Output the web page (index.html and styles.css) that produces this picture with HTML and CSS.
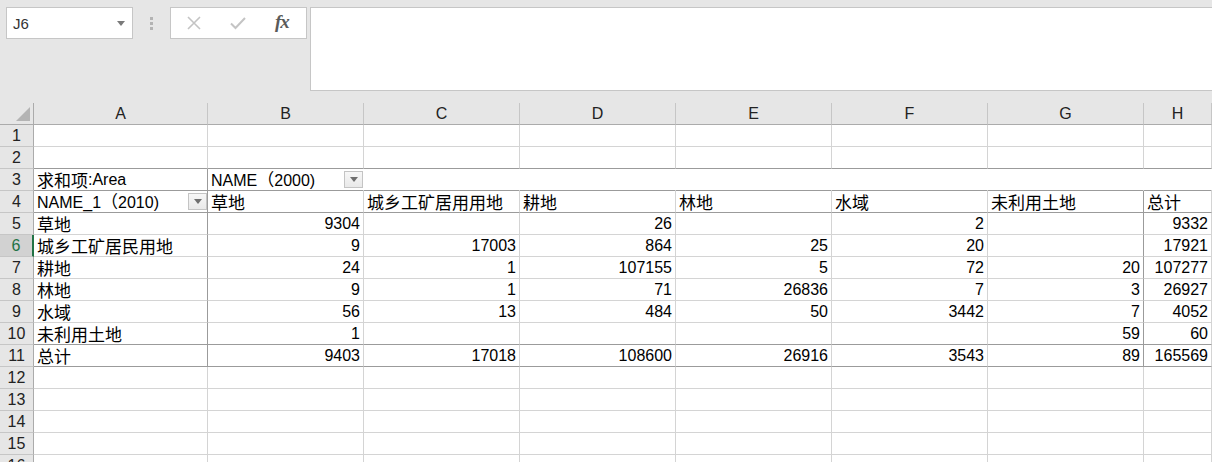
FILE: index.html
```html
<!DOCTYPE html>
<html lang="zh-CN">
<head>
<meta charset="utf-8">
<title>Pivot</title>
<link rel="stylesheet" href="styles.css">
</head>
<body>
<div class="toolbar">
  <div class="namebox">
    <span class="nb-text">J6</span>
    <svg class="nb-arrow" width="8" height="5" viewBox="0 0 8 5"><path d="M0 0H8L4 5Z" fill="#7a7a7a"/></svg>
  </div>
  <div class="grip"><i></i><i></i><i></i></div>
  <div class="fxbox">
    <svg class="ic" width="16" height="16" viewBox="0 0 16 16"><path d="M2 2L14 14M14 2L2 14" stroke="#c4c4c4" stroke-width="1.6" fill="none"/></svg>
    <svg class="ic" width="18" height="16" viewBox="0 0 18 16"><path d="M2 8.5L6.5 13L16 3" stroke="#c4c4c4" stroke-width="2" fill="none"/></svg>
    <span class="fx">fx</span>
  </div>
  <div class="formula"></div>
</div>

<div class="sheet">
  <div class="corner"><span class="tri"></span></div>
  <div class="ch">A</div><div class="ch">B</div><div class="ch">C</div><div class="ch">D</div><div class="ch">E</div><div class="ch">F</div><div class="ch">G</div><div class="ch">H</div>

  <div class="rh">1</div>
  <div class="c"></div><div class="c"></div><div class="c"></div><div class="c"></div><div class="c"></div><div class="c"></div><div class="c"></div><div class="c"></div>

  <div class="rh">2</div>
  <div class="c db"></div><div class="c db"></div><div class="c db"></div><div class="c db"></div><div class="c db"></div><div class="c db"></div><div class="c db"></div><div class="c db"></div>

  <div class="rh">3</div>
  <div class="c db dr"><span class="z">求和项</span>:Area</div>
  <div class="c db nr field"><span>NAME<span class="z">（</span>2000)</span><span class="dd"><svg width="8" height="5" viewBox="0 0 8 5"><path d="M0 0H8L4 5Z" fill="#6f6f6f"/></svg></span></div>
  <div class="c db nr"></div><div class="c db nr"></div><div class="c db nr"></div><div class="c db nr"></div><div class="c db nr"></div><div class="c db nr"></div>

  <div class="rh">4</div>
  <div class="c db dr field"><span>NAME_1<span class="z">（</span>2010)</span><span class="dd"><svg width="8" height="5" viewBox="0 0 8 5"><path d="M0 0H8L4 5Z" fill="#6f6f6f"/></svg></span></div>
  <div class="c db z">草地</div><div class="c db z">城乡工矿居用用地</div><div class="c db z">耕地</div><div class="c db z">林地</div><div class="c db z">水域</div><div class="c db dr z">未利用土地</div><div class="c db z">总计</div>

  <div class="rh">5</div>
  <div class="c dr z">草地</div><div class="c n">9304</div><div class="c n"></div><div class="c n">26</div><div class="c n"></div><div class="c n">2</div><div class="c n dr"></div><div class="c n">9332</div>

  <div class="rh sel">6</div>
  <div class="c dr z">城乡工矿居民用地</div><div class="c n">9</div><div class="c n">17003</div><div class="c n">864</div><div class="c n">25</div><div class="c n">20</div><div class="c n dr"></div><div class="c n">17921</div>

  <div class="rh">7</div>
  <div class="c dr z">耕地</div><div class="c n">24</div><div class="c n">1</div><div class="c n">107155</div><div class="c n">5</div><div class="c n">72</div><div class="c n dr">20</div><div class="c n">107277</div>

  <div class="rh">8</div>
  <div class="c dr z">林地</div><div class="c n">9</div><div class="c n">1</div><div class="c n">71</div><div class="c n">26836</div><div class="c n">7</div><div class="c n dr">3</div><div class="c n">26927</div>

  <div class="rh">9</div>
  <div class="c dr z">水域</div><div class="c n">56</div><div class="c n">13</div><div class="c n">484</div><div class="c n">50</div><div class="c n">3442</div><div class="c n dr">7</div><div class="c n">4052</div>

  <div class="rh">10</div>
  <div class="c dr db z">未利用土地</div><div class="c n db">1</div><div class="c n db"></div><div class="c n db"></div><div class="c n db"></div><div class="c n db"></div><div class="c n db dr">59</div><div class="c n db">60</div>

  <div class="rh">11</div>
  <div class="c dr db z">总计</div><div class="c n db">9403</div><div class="c n db">17018</div><div class="c n db">108600</div><div class="c n db">26916</div><div class="c n db">3543</div><div class="c n db dr">89</div><div class="c n db">165569</div>

  <div class="rh">12</div>
  <div class="c"></div><div class="c"></div><div class="c"></div><div class="c"></div><div class="c"></div><div class="c"></div><div class="c"></div><div class="c"></div>

  <div class="rh">13</div>
  <div class="c"></div><div class="c"></div><div class="c"></div><div class="c"></div><div class="c"></div><div class="c"></div><div class="c"></div><div class="c"></div>

  <div class="rh">14</div>
  <div class="c"></div><div class="c"></div><div class="c"></div><div class="c"></div><div class="c"></div><div class="c"></div><div class="c"></div><div class="c"></div>

  <div class="rh">15</div>
  <div class="c"></div><div class="c"></div><div class="c"></div><div class="c"></div><div class="c"></div><div class="c"></div><div class="c"></div><div class="c"></div>

  <div class="rh">16</div>
  <div class="c"></div><div class="c"></div><div class="c"></div><div class="c"></div><div class="c"></div><div class="c"></div><div class="c"></div><div class="c"></div>
</div>
</body>
</html>
```

FILE: styles.css
```css
html, body {
  margin: 0;
  padding: 0;
  background: #e6e6e6;
  overflow: hidden;
  width: 1212px;
  height: 462px;
}

body {
  font-family: "Liberation Sans", "Noto Sans CJK SC", sans-serif;
  font-size: 16px;
  color: #000;
}

.z {
  font-family: "Noto Sans CJK SC", sans-serif;
  font-size: 17px;
}

.toolbar {
  height: 103px;
  box-sizing: border-box;
  padding: 7px 0 0 6px;
  display: flex;
  align-items: flex-start;
}

.namebox {
  width: 127px;
  height: 32px;
  box-sizing: border-box;
  background: #fff;
  border: 1px solid #c6c6c6;
  display: flex;
  align-items: center;
  justify-content: space-between;
  padding: 0 7px 0 6px;
}

.nb-text {
  color: #333;
  font-size: 15px;
}

.grip {
  width: 37px;
  height: 32px;
  display: flex;
  flex-direction: column;
  align-items: center;
  justify-content: center;
  gap: 2px;
}

.grip i {
  display: block;
  width: 3px;
  height: 3px;
  background: #b3b3b3;
}

.fxbox {
  width: 137px;
  height: 32px;
  box-sizing: border-box;
  background: #fff;
  border: 1px solid #c6c6c6;
  display: flex;
  align-items: center;
  padding-left: 15px;
  gap: 27px;
}

.fx {
  font-family: "Liberation Serif", serif;
  font-style: italic;
  font-weight: bold;
  font-size: 19px;
  color: #5a5a5a;
  letter-spacing: -1px;
  margin-left: 1px;
  margin-top: -2px;
}

.formula {
  flex: 1;
  height: 84px;
  margin-left: 3px;
  margin-right: -2px;
  box-sizing: border-box;
  background: #fff;
  border: 1px solid #c6c6c6;
}

.sheet {
  display: grid;
  grid-template-columns: 34px 174px repeat(6, 156px) 68px;
  grid-auto-rows: 22px;
  background: #fff;
}

.corner,
.ch,
.rh {
  background: #e6e6e6;
  box-sizing: border-box;
  color: #222;
}

.corner {
  position: relative;
  border-right: 1px solid #ababab;
  border-bottom: 1px solid #ababab;
}

.tri {
  position: absolute;
  right: 3px;
  bottom: 3px;
  width: 0;
  height: 0;
  border-style: solid;
  border-width: 0 0 14px 14px;
  border-color: transparent transparent #b4b4b4 transparent;
}

.ch {
  border-right: 1px solid #c6c6c6;
  border-bottom: 1px solid #ababab;
  display: flex;
  align-items: center;
  justify-content: center;
  line-height: 21px;
}

.rh {
  border-right: 1px solid #ababab;
  border-bottom: 1px solid #c6c6c6;
  display: flex;
  align-items: center;
  justify-content: center;
  line-height: 21px;
}

.rh.sel {
  background: #d2d2d2;
  color: #217346;
  border-right: 2px solid #217346;
}

.c {
  box-sizing: border-box;
  border-right: 1px solid #d4d4d4;
  border-bottom: 1px solid #d4d4d4;
  padding: 0 3px;
  line-height: 21px;
  white-space: nowrap;
  display: flex;
  align-items: center;
  min-width: 0;
}

.n {
  justify-content: flex-end;
}

.db {
  border-bottom-color: #9b9b9b;
}

.dr {
  border-right-color: #9b9b9b;
}

.nr {
  border-right-color: transparent;
}

.field {
  justify-content: space-between;
  padding-right: 0;
}

.dd {
  width: 19px;
  height: 17px;
  box-sizing: border-box;
  border: 1px solid #c4c4c4;
  background: linear-gradient(#f7f7f7, #e9e9e9);
  display: flex;
  align-items: center;
  justify-content: center;
  flex: none;
}
```
